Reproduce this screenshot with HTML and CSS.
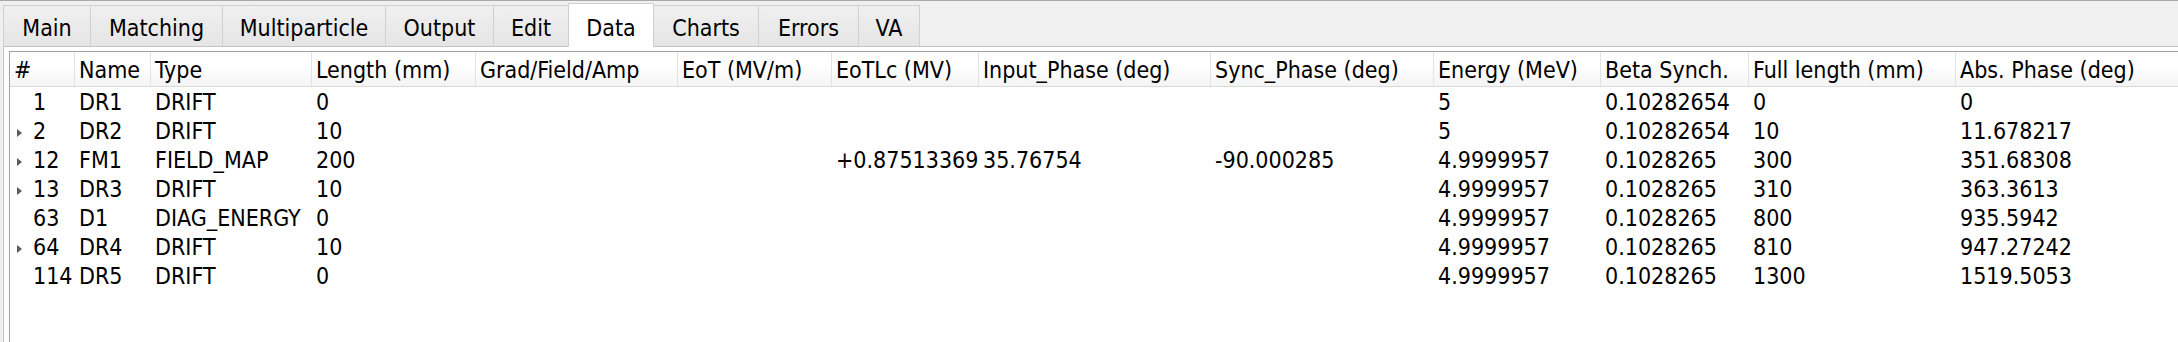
FILE: index.html
```html
<!DOCTYPE html>
<html lang="en">
<head>
  <meta charset="UTF-8" />
  <title>Data</title>
  <link rel="stylesheet" href="styles.css">
</head>
<body>
  <div class="window">
    <div class="tabbar">
      <div class="tab tab-main">Main</div>
      <div class="tab tab-matching">Matching</div>
      <div class="tab tab-multi">Multiparticle</div>
      <div class="tab tab-output">Output</div>
      <div class="tab tab-edit">Edit</div>
      <div class="tab tab-data active">Data</div>
      <div class="tab tab-charts">Charts</div>
      <div class="tab tab-errors">Errors</div>
      <div class="tab tab-va">VA</div>
    </div>

    <div class="pane">
      <div class="tree">
        <div class="tree-head">
          <div class="hcell">#</div>
          <div class="hcell">Name</div>
          <div class="hcell">Type</div>
          <div class="hcell">Length (mm)</div>
          <div class="hcell">Grad/Field/Amp</div>
          <div class="hcell">EoT (MV/m)</div>
          <div class="hcell">EoTLc (MV)</div>
          <div class="hcell">Input_Phase (deg)</div>
          <div class="hcell">Sync_Phase (deg)</div>
          <div class="hcell">Energy (MeV)</div>
          <div class="hcell">Beta Synch.</div>
          <div class="hcell">Full length (mm)</div>
          <div class="hcell">Abs. Phase (deg)</div>
        </div>

        <div class="tree-row">
          <div class="cell idx"><span class="branch"></span>1</div>
          <div class="cell">DR1</div>
          <div class="cell">DRIFT</div>
          <div class="cell">0</div>
          <div class="cell"></div>
          <div class="cell"></div>
          <div class="cell"></div>
          <div class="cell"></div>
          <div class="cell"></div>
          <div class="cell">5</div>
          <div class="cell">0.10282654</div>
          <div class="cell">0</div>
          <div class="cell">0</div>
        </div>

        <div class="tree-row">
          <div class="cell idx"><span class="branch closed"></span>2</div>
          <div class="cell">DR2</div>
          <div class="cell">DRIFT</div>
          <div class="cell">10</div>
          <div class="cell"></div>
          <div class="cell"></div>
          <div class="cell"></div>
          <div class="cell"></div>
          <div class="cell"></div>
          <div class="cell">5</div>
          <div class="cell">0.10282654</div>
          <div class="cell">10</div>
          <div class="cell">11.678217</div>
        </div>

        <div class="tree-row">
          <div class="cell idx"><span class="branch closed"></span>12</div>
          <div class="cell">FM1</div>
          <div class="cell">FIELD_MAP</div>
          <div class="cell">200</div>
          <div class="cell"></div>
          <div class="cell"></div>
          <div class="cell">+0.87513369</div>
          <div class="cell">35.76754</div>
          <div class="cell">-90.000285</div>
          <div class="cell">4.9999957</div>
          <div class="cell">0.1028265</div>
          <div class="cell">300</div>
          <div class="cell">351.68308</div>
        </div>

        <div class="tree-row">
          <div class="cell idx"><span class="branch closed"></span>13</div>
          <div class="cell">DR3</div>
          <div class="cell">DRIFT</div>
          <div class="cell">10</div>
          <div class="cell"></div>
          <div class="cell"></div>
          <div class="cell"></div>
          <div class="cell"></div>
          <div class="cell"></div>
          <div class="cell">4.9999957</div>
          <div class="cell">0.1028265</div>
          <div class="cell">310</div>
          <div class="cell">363.3613</div>
        </div>

        <div class="tree-row">
          <div class="cell idx"><span class="branch"></span>63</div>
          <div class="cell">D1</div>
          <div class="cell">DIAG_ENERGY</div>
          <div class="cell">0</div>
          <div class="cell"></div>
          <div class="cell"></div>
          <div class="cell"></div>
          <div class="cell"></div>
          <div class="cell"></div>
          <div class="cell">4.9999957</div>
          <div class="cell">0.1028265</div>
          <div class="cell">800</div>
          <div class="cell">935.5942</div>
        </div>

        <div class="tree-row">
          <div class="cell idx"><span class="branch closed"></span>64</div>
          <div class="cell">DR4</div>
          <div class="cell">DRIFT</div>
          <div class="cell">10</div>
          <div class="cell"></div>
          <div class="cell"></div>
          <div class="cell"></div>
          <div class="cell"></div>
          <div class="cell"></div>
          <div class="cell">4.9999957</div>
          <div class="cell">0.1028265</div>
          <div class="cell">810</div>
          <div class="cell">947.27242</div>
        </div>

        <div class="tree-row">
          <div class="cell idx"><span class="branch"></span>114</div>
          <div class="cell">DR5</div>
          <div class="cell">DRIFT</div>
          <div class="cell">0</div>
          <div class="cell"></div>
          <div class="cell"></div>
          <div class="cell"></div>
          <div class="cell"></div>
          <div class="cell"></div>
          <div class="cell">4.9999957</div>
          <div class="cell">0.1028265</div>
          <div class="cell">1300</div>
          <div class="cell">1519.5053</div>
        </div>
      </div>
    </div>
  </div>
</body>
</html>
```

FILE: styles.css
```css
body {
  margin: 0;
  background: #f0f0f0;
  font-family: "DejaVu Sans Condensed", "Liberation Sans", sans-serif;
  font-stretch: condensed;
  font-size: 23px;
  color: #000;
  overflow: hidden;
}

.window {
  height: 341px;
  border-top: 1px solid #a8a8a8;
  display: flex;
  flex-direction: column;
}

/* tab strip */
.tabbar {
  height: 45px;
  padding-left: 3px;
  display: flex;
  align-items: flex-end;
}

.tab {
  box-sizing: border-box;
  height: 41px;
  margin-right: -1px;
  padding-top: 5px;
  line-height: 34px;
  text-align: center;
  white-space: nowrap;
  background: linear-gradient(#f0f0f0, #e5e5e5);
  border: 1px solid #d0d0d0;
  border-bottom: none;
}

.tab.active {
  position: relative;
  z-index: 1;
  height: 44px;
  margin-bottom: -1px;
  padding-top: 7px;
  background: #fff;
  border-color: #d0d0d0;
}

.tab-main { width: 88px; }
.tab-matching { width: 133px; }
.tab-multi { width: 164px; }
.tab-output { width: 109px; }
.tab-edit { width: 76px; }
.tab-data { width: 86px; }
.tab-charts { width: 106px; }
.tab-errors { width: 101px; }
.tab-va { width: 62px; }

/* page under the tabs */
.pane {
  flex: 1;
  margin-left: 3px;
  padding: 4px 0 0 5px;
  background: #fff;
  border-top: 1px solid #c4c4c4;
  border-left: 1px solid #c4c4c4;
  overflow: hidden;
}

.tree {
  width: 2400px;
  height: 100%;
  background: #fff;
  border-top: 1px solid #a0a0a0;
  border-left: 1px solid #a0a0a0;
}

.tree-head,
.tree-row {
  display: grid;
  grid-template-columns: 65px 76px 161px 164px 202px 154px 147px 232px 223px 167px 148px 207px 300px;
}

.tree-head {
  height: 34px;
  background: linear-gradient(#ffffff 40%, #f4f4f4);
  border-bottom: 1px solid #dadada;
}

.hcell {
  padding: 2px 0 0 4px;
  line-height: 32px;
  white-space: nowrap;
  overflow: hidden;
  border-right: 1px solid #e3e3e3;
}

.tree-row {
  height: 29px;
}

.cell {
  padding: 2px 0 0 4px;
  line-height: 27px;
  white-space: nowrap;
  overflow: hidden;
}

.cell.idx {
  padding-left: 0;
  display: flex;
  align-items: center;
}

.branch {
  width: 23px;
  height: 100%;
  flex-shrink: 0;
  display: flex;
  align-items: center;
}

.branch.closed::before {
  content: "";
  margin-left: 7px;
  margin-top: 2px;
  border-left: 5px solid #5c5c5c;
  border-top: 4px solid transparent;
  border-bottom: 4px solid transparent;
}
```
